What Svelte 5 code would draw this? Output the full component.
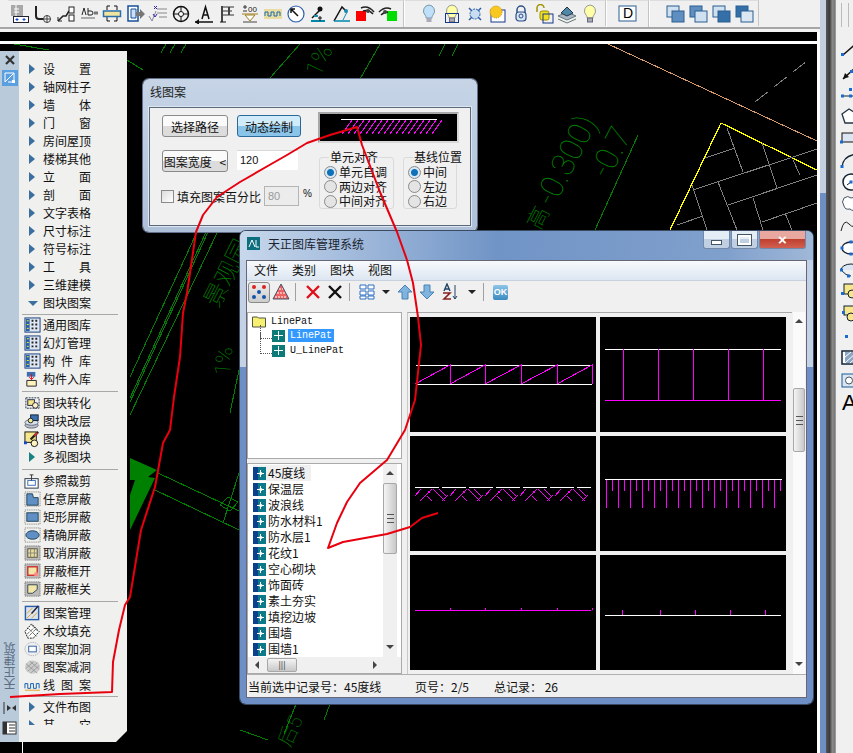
<script>
  const sym = {
    lib: '<rect x="1" y="1" width="16" height="15" fill="#dde6f2" stroke="#123a7a"/><rect x="2" y="2" width="4" height="13" fill="#2b5ea8"/><path d="M8 3h2v2H8zM12 3h2v2h-2zM8 7h2v2H8zM12 7h2v2h-2zM8 11h2v2H8zM12 11h2v2h-2z" fill="#222"/><path d="M3 4h2M3 8h2M3 12h2" stroke="#ff0"/>',
    store: '<rect x="3" y="1" width="9" height="5" fill="#3b6fb0"/><path d="M8 3v6M5.500 6.500L8 9l2.500-2.500" stroke="#e01" fill="none"/><path d="M3 10h10v6H3z" fill="#fff3c0" stroke="#222"/>',
    conv: '<rect x="2" y="3" width="14" height="11" fill="none" stroke="#234" stroke-dasharray="2 1"/><rect x="4" y="5" width="7" height="6" fill="#f6e78a" stroke="#224"/><circle cx="12" cy="11" r="3" fill="#fff3c0" stroke="#224"/>',
    layer: '<ellipse cx="8" cy="13" rx="7" ry="3" fill="#b8c2cc" stroke="#667"/><ellipse cx="8" cy="10" rx="7" ry="3" fill="#d8e0e8" stroke="#667"/><rect x="7" y="2" width="8" height="6" fill="#3b6fb0" stroke="#123"/><circle cx="7" cy="8" r="2.500" fill="#f6e78a" stroke="#123"/>',
    swap: '<rect x="1" y="1" width="12" height="11" fill="#f6e78a" stroke="#111"/><path d="M15 1L7 9" stroke="#222" stroke-width="2.500"/><path d="M14 2l-3 3" stroke="#c33" stroke-width="2"/><circle cx="11" cy="13" r="3.500" fill="#fff3c0" stroke="#111"/><rect x="0" y="11" width="3" height="3" fill="#14c"/>',
    clip: '<rect x="1" y="6" width="14" height="10" fill="#fff" stroke="#234"/><rect x="4" y="8" width="8" height="5" fill="none" stroke="#3b6fb0"/><path d="M8 2v6M6 2h4" stroke="#333"/>',
    maskL: '<rect x="1" y="1" width="16" height="15" fill="none" stroke="#777" stroke-dasharray="1 1"/><path d="M3 3h6l1 4h5v8H3z" fill="#5f8fc4" stroke="#245"/>',
    maskR: '<rect x="1" y="1" width="16" height="15" fill="none" stroke="#777" stroke-dasharray="1 1"/><rect x="3" y="4" width="12" height="9" fill="#5f8fc4" stroke="#245"/>',
    maskE: '<rect x="1" y="1" width="16" height="15" fill="none" stroke="#777" stroke-dasharray="1 1"/><ellipse cx="9" cy="8.500" rx="7" ry="4.500" fill="#5f8fc4" stroke="#245"/>',
    maskX: '<rect x="1" y="1" width="16" height="15" fill="#bbb" stroke="#666" stroke-dasharray="1 1"/><rect x="4" y="4" width="10" height="9" fill="#e8dca0" stroke="#554"/><path d="M7 4v9M11 4v9M4 8.500h10" stroke="#887"/>',
    maskO: '<rect x="1" y="1" width="16" height="15" fill="#bbb" stroke="#666" stroke-dasharray="1 1"/><rect x="4" y="4" width="10" height="9" fill="#f2e6a8" stroke="#c33" stroke-width="1.500"/><rect x="11" y="10" width="4" height="4" fill="#f88"/>',
    maskC: '<rect x="1" y="1" width="16" height="15" fill="#bbb" stroke="#666" stroke-dasharray="1 1"/><path d="M4 4h10v5l-5 4H4z" fill="#f2e6a8" stroke="#345"/>',
    pat: '<rect x="1.500" y="1.500" width="14" height="14" fill="#d8e4f2" stroke="#2b5ea8" stroke-width="1.500"/><path d="M3 14L14 3M3 9l6-6M8 14l6-6" stroke="#e8a020"/><path d="M15 1L8 9" stroke="#223" stroke-width="1.500"/>',
    wood: '<path d="M1 9L8 1l8 8-6 7H4z" fill="#fff" stroke="#111" stroke-dasharray="2 1"/><path d="M3 12L12 4M5 14l8-8M4 5l9 9M8 2l7 7" stroke="#111" stroke-dasharray="1 1"/>',
    hole: '<ellipse cx="9" cy="8.500" rx="8" ry="7" fill="none" stroke="#99a" stroke-dasharray="1 1"/><rect x="5" y="5.500" width="8" height="6" fill="#fff" stroke="#2b5ea8"/>',
    unhole: '<ellipse cx="9" cy="8.500" rx="8" ry="7" fill="#ccc"/><path d="M2 10l8-7M4 13l10-9M7 15l9-8M2 5l12 10M6 2l10 9" stroke="#888" stroke-width=".7"/>',
    wave: '<path d="M1 14h16" stroke="#e8a020"/><path d="M1 12V7h3v5h3V7h3v5h3V7h3v5" fill="none" stroke="#0a5ab0"/>'
  };

  const menu = [
    { t: '设置', a: 1 }, { t: '轴网柱子', a: 1 }, { t: '墙体', a: 1 }, { t: '门窗', a: 1 },
    { t: '房间屋顶', a: 1 }, { t: '楼梯其他', a: 1 }, { t: '立面', a: 1 }, { t: '剖面', a: 1 },
    { t: '文字表格', a: 1 }, { t: '尺寸标注', a: 1 }, { t: '符号标注', a: 1 }, { t: '工具', a: 1 },
    { t: '三维建模', a: 1 }, { t: '图块图案', d: 1 }, { sep: 'tight' },
    { t: '通用图库', i: 'lib' }, { t: '幻灯管理', i: 'lib' }, { t: '构件库', i: 'lib' }, { t: '构件入库', i: 'store' }, { sep: 'wide' },
    { t: '图块转化', i: 'conv' }, { t: '图块改层', i: 'layer' }, { t: '图块替换', i: 'swap' }, { t: '多视图块', a: 2 }, { sep: 'wide' },
    { t: '参照裁剪', i: 'clip' }, { t: '任意屏蔽', i: 'maskL' }, { t: '矩形屏蔽', i: 'maskR' }, { t: '精确屏蔽', i: 'maskE' },
    { t: '取消屏蔽', i: 'maskX' }, { t: '屏蔽框开', i: 'maskO' }, { t: '屏蔽框关', i: 'maskC' }, { sep: 'wide' },
    { t: '图案管理', i: 'pat' }, { t: '木纹填充', i: 'wood' }, { t: '图案加洞', i: 'hole' }, { t: '图案减洞', i: 'unhole' }, { t: '线图案', i: 'wave' }, { sep: 'tight' },
    { t: '文件布图', a: 1 }, { t: '其它', a: 1 }
  ];

  const group1 = [
    '<rect x="1" y="1" width="12" height="11" fill="#a8a8a8"/><path d="M6 1v11M4 5h5M4 8h5" stroke="#fff"/><rect x="3.500" y="12.500" width="15" height="6" fill="#fff" stroke="#223"/><path d="M7 14v3M5.500 15.500h3M14 14v3M12.500 15.500h3" stroke="#14c"/>',
    '<path d="M3 2v10a3 3 0 0 0 3 3h5" fill="none" stroke="#222" stroke-width="2"/><circle cx="14" cy="15" r="3.500" fill="none" stroke="#444"/><path d="M14 11v8M10 15h8" stroke="#444"/>',
    '<path d="M2 17l5-5h3l3-5" fill="none" stroke="#222" stroke-width="1.500"/><path d="M2 13v4h4" fill="none" stroke="#222"/><rect x="13" y="3" width="5" height="6" fill="#fff" stroke="#222"/><rect x="13" y="11" width="5" height="6" fill="#fff" stroke="#222"/>',
    '<path d="M2 14h14" stroke="#666"/><path d="M3 11L5 4l2 7M9 4v7h3a2 2 0 0 0 0-4H9" fill="none" stroke="#222"/><path d="M15 9h4" stroke="#777" stroke-width="3"/>',
    '<path d="M5 6V2h3M12 2h3v4M5 13v4h3M12 17h3v-4" fill="none" stroke="#111"/><rect x="1.500" y="7" width="17" height="5.500" fill="#f0e4a0" stroke="#2b6ea8" stroke-width="1.500"/>',
    '<path d="M3 2h10v15H3z" fill="#fff" stroke="#14529a" stroke-width="1.500"/><path d="M6 5h5v9H6z" fill="#cfe0f4" stroke="#14529a"/><path d="M11 8h4V5l5 5-5 5v-3h-4z" fill="#777"/>',
    '<path d="M9 5h10M9 9h10M11 13h8" stroke="#888"/><path d="M1 12l3 5 4-10" fill="none" stroke="#889"/><path d="M6 2l3 3M9 2L6 5M5 10l2 3 2-3" stroke="#32a" fill="none"/>',
    '<circle cx="10" cy="10" r="7.500" fill="none" stroke="#111" stroke-width="1.500"/><path d="M10 2v16M2 10h16" stroke="#111"/><circle cx="10" cy="10" r="2.500" fill="#fff" stroke="#111"/>',
    '<path d="M8 15L11.500 3 15 15M9.500 11h4M1 18h18" fill="none" stroke="#111" stroke-width="1.500"/><path d="M1 18l4-3v6z" fill="#111"/>',
    '<path d="M5 3h12M5 7h10M5 11h12" stroke="#333"/><path d="M5 2v16M12 3v8" stroke="#444" stroke-width="2"/><path d="M3 18h6" stroke="#111"/>',
    '<path d="M3 3h4M5 1v4M3 7h4" stroke="#333"/><text x="8" y="8" font-size="8" font-family="Liberation Sans" fill="#222">00</text><path d="M2 10h16" stroke="#a08020"/><path d="M5 11h10l-5 6z" fill="#fff" stroke="#a08020"/><path d="M3 18h14" stroke="#444"/>',
    '<rect x="1" y="5" width="18" height="10" fill="#e8dca0"/><path d="M2 12V8h3v4h3V8h3v4h3V8h3v4" fill="none" stroke="#1a6ab0"/>',
    '<circle cx="10" cy="10" r="8" fill="#fff" stroke="#2b5ea8" stroke-width="1.200"/><path d="M12 12L5 5M5 9V5h4" fill="none" stroke="#111" stroke-width="1.500"/>',
    '<path d="M2 17h14" stroke="#08a" stroke-width="2"/><path d="M3 14l4-4 5-5" stroke="#111" stroke-width="1.500"/><circle cx="11" cy="5" r="2.500" fill="#111"/><path d="M11 12v5M9 14h4" stroke="#111"/><rect x="5" y="11" width="4" height="2" fill="#1a8ab0"/>',
    '<path d="M2 17L10 3l5 5" fill="none" stroke="#111" stroke-width="1.500"/><path d="M2 17h16" stroke="#08a" stroke-width="1.500"/><circle cx="14" cy="7" r="2" fill="#1a8ab0"/><path d="M11 16l4-8" stroke="#1a8ab0"/>',
    '<rect x="1" y="7" width="10" height="10" fill="#f00"/><path d="M6 4q7-3 13 4M8 7q6-2 10 3" fill="none" stroke="#222" stroke-width="1.500"/><circle cx="13" cy="7" r="2" fill="#444"/>',
    '<rect x="9" y="7" width="10" height="10" fill="#0d0"/><path d="M1 8q6-6 12-3M3 11q3-3 7-3" fill="none" stroke="#222" stroke-width="1.500"/><circle cx="7" cy="8" r="2" fill="#444"/>'
  ];

  const bulb = '<path d="M10 1a6 6 0 0 0-4 10c1 1 1 2 1 3h6c0-1 0-2 1-3a6 6 0 0 0-4-10z" fill="#ffffa8" stroke="#999"/><rect x="7.500" y="14" width="5" height="4" fill="#aab" stroke="#667"/>';
  const group2 = [
    '<path d="M10 1a6 6 0 0 0-4 10c1 1 1 2 1 3h6c0-1 0-2 1-3a6 6 0 0 0-4-10z" fill="#bfe0f8" stroke="#79a"/><rect x="7.500" y="14" width="5" height="4" fill="#aab"/>',
    bulb + '<rect x="3.500" y="9.500" width="13" height="9" fill="none" stroke="#14388a"/>',
    '<circle cx="10" cy="10" r="5" fill="#c8dcf2" stroke="#2b5ea8" stroke-dasharray="2 1"/><path d="M4 4l3 3M16 4l-3 3M4 16l3-3M16 16l-3-3" stroke="#2b5ea8" stroke-width="1.500"/>',
    '<rect x="3" y="6" width="14" height="12" fill="#fff" stroke="#14388a"/><circle cx="8" cy="8" r="6" fill="#f8c820" stroke="#c89000" stroke-dasharray="1 1"/>',
    '<path d="M6 9V6a4 4 0 0 1 8 0v3" fill="none" stroke="#2b4f88" stroke-width="1.500"/><rect x="5" y="8" width="10" height="9" rx="3" fill="#d8e4f4" stroke="#2b4f88" stroke-width="1.200"/><circle cx="10" cy="12" r="2" fill="none" stroke="#2b4f88"/>',
    '<path d="M3 8V4a3.500 3.500 0 0 1 7 0" fill="none" stroke="#a09000" stroke-width="1.500"/><rect x="6" y="7" width="9" height="9" rx="2" fill="#f0e020" stroke="#a09000"/><rect x="9" y="10" width="10" height="9" fill="none" stroke="#14388a"/>',
    '<path d="M1 12l9-4 9 4-9 4z" fill="#aab8c8" stroke="#677"/><path d="M1 15l9 4 9-4" fill="none" stroke="#677"/><path d="M4 9l6-6 6 6-6 3z" fill="#4f88a8" stroke="#234"/>',
    bulb
  ];
  const stack = (a, b) => `<rect x="2" y="2" width="12" height="11" fill="${a}" stroke="#2b5e90"/><rect x="7" y="7" width="12" height="11" fill="${b}" stroke="#2b5e90"/>`;
  const group3 = [stack('#cfe0f0', '#5f8fc0'), stack('#5f8fc0', '#cfe0f0'), stack('#cfe0f0', '#346fa8'), stack('#346fa8', '#dbe8f4')];

  const rail = [
    '<path d="M3 15L18 2" stroke="#111" stroke-width="1.500"/><rect x="1" y="13" width="3" height="3" fill="#1a6ad0"/><rect x="16" y="1" width="3" height="3" fill="#1a6ad0"/>',
    '<path d="M3 17L18 3" stroke="#111" stroke-width="1.500"/><path d="M3 17l2-6 4 4z" fill="#111"/><rect x="10" y="8" width="3" height="3" fill="#1a6ad0"/>',
    '<path d="M2 12h18" stroke="#123"/><rect x="1" y="10.500" width="3" height="3" fill="#1a6ad0"/><rect x="9" y="10.500" width="3" height="3" fill="#1a6ad0"/><rect x="9" y="4" width="3" height="3" fill="#1a6ad0"/>',
    '<path d="M2 8l7-5 8 5-3 9H5z" fill="#fff" stroke="#234" stroke-width="1.300"/>',
    '<rect x="2" y="5" width="18" height="9" fill="#dce6f2" stroke="#111"/><rect x="0" y="12.500" width="3" height="3" fill="#1a6ad0"/>',
    '<path d="M2 17Q3 5 18 4" fill="none" stroke="#123" stroke-width="1.300"/><rect x="0.500" y="15" width="3" height="3" fill="#1a6ad0"/>',
    '<circle cx="11" cy="10" r="8" fill="#fff" stroke="#123" stroke-width="1.500"/><path d="M11 10L7 13" stroke="#123"/><rect x="9.500" y="8.500" width="3" height="3" fill="#1a6ad0"/>',
    '<path d="M4 4q4-3 7 0q6-2 9 2l-1 9q-6 3-9 0q-5 1-6-3q-3-4 0-8z" fill="#fff" stroke="#456"/>',
    '<path d="M1 15Q4 2 9 8t11-2" fill="none" stroke="#222"/>',
    '<ellipse cx="11" cy="10" rx="9" ry="6" fill="#fff" stroke="#123" stroke-width="1.300"/><rect x="0.500" y="8.500" width="3" height="3" fill="#1a6ad0"/><rect x="9.500" y="2.500" width="3" height="3" fill="#1a6ad0"/><rect x="9.500" y="14.500" width="3" height="3" fill="#1a6ad0"/>',
    '<path d="M1 10a10 6 0 0 1 20 0" fill="#dce6f2" stroke="#123"/><path d="M1 10q5 6 10 6" fill="none" stroke="#123"/><rect x="0" y="8.500" width="3" height="3" fill="#1a6ad0"/><rect x="7" y="14.500" width="3" height="3" fill="#1a6ad0"/>',
    '<rect x="4" y="2" width="12" height="10" fill="#f6e78a" stroke="#123"/><circle cx="12" cy="12" r="4" fill="#f6e78a" stroke="#123"/><rect x="1" y="10" width="3" height="3" fill="#1a6ad0"/>',
    '<rect x="4" y="2" width="10" height="9" fill="#f6e78a" stroke="#123"/><circle cx="11" cy="13" r="4" fill="#f6e78a" stroke="#123"/><rect x="2" y="7" width="3" height="3" fill="#1a6ad0"/>',
    '<rect x="5" y="9" width="3" height="3" fill="#1a6ad0"/>',
    '<rect x="2" y="3" width="18" height="13" fill="#fff" stroke="#123" stroke-width="1.500"/><rect x="5" y="4" width="12" height="11" fill="#8aa6c4"/><path d="M5 15L17 4M5 9l6-5M10 15l7-6" stroke="#fff"/>',
    '<rect x="2" y="4" width="18" height="13" fill="#dce6f2" stroke="#1a5a98"/><circle cx="9" cy="10.500" r="3.500" fill="#fff" stroke="#456"/>'
  ];

  const fileList = ['45度线', '保温层', '波浪线', '防水材料1', '防水层1', '花纹1', '空心砌块', '饰面砖', '素土夯实', '填挖边坡', '围墙', '围墙1'];

  const cell1x = [40, 75, 111, 147, 182];
  const cell2x = [23, 58, 93, 128, 163];
  const cell6x = [22, 60, 95, 130, 165];

  let hatch = '';
  for (let k = 0; k < 5; k++) {
    const x = 5 + 35 * k;
    hatch += `M${x} 60l6-7M${x + 5} 65l12-12M${x + 12} 60l5 5M${x + 18} 53l12 12M${x + 24} 53l7 7M${x + 27} 65l6-6M${x + 13} 55l2 2 `;
  }

  const ticks = [];
  for (let i = 0; i < 30; i++) ticks.push({ x: 6 + i * 6, y: i % 2 ? 55 : 72 });

  let diag = '';
  for (let x = 342; x < 436; x += 6) diag += `M${x} 134l10-14 `;
</script>

<div class="app">
  <div class="main">
    <div class="topbar">
      <div class="tgroup first">
        {#each group1 as ic}
          <span class="tb"><svg viewBox="0 0 20 20" width="20" height="20">{@html ic}</svg></span>
        {/each}
      </div>
      <div class="tgroup second">
        {#each group2 as ic}
          <span class="tb"><svg viewBox="0 0 20 20" width="20" height="20">{@html ic}</svg></span>
        {/each}
      </div>
      <div class="tgroup third">
        <span class="tb d"><svg viewBox="0 0 20 20" width="20" height="20"><rect x="1" y="2" width="17" height="15" fill="#fff" stroke="#2b5e90"/></svg><b>D</b></span>
      </div>
      <div class="tgroup fourth">
        {#each group3 as ic}
          <span class="tb"><svg viewBox="0 0 20 20" width="20" height="20">{@html ic}</svg></span>
        {/each}
      </div>
    </div>
    <div class="cmdline"></div>
    <div class="canvas">
      <svg class="cad" viewBox="0 44 817 709" width="817" height="709" fill="none">
        <g stroke="#008000" shape-rendering="crispEdges">
          <path d="M14 44l35 6M166 44l-5 9M175 44l-5 9M186 44l-5 9M445 44l-6 12M458 44l-6 12" />
          <path d="M130 377L197 232M130 398L206 232M130 402L208 232M130 415L217 233M230 413L239 370" />
          <path d="M158 473L239 511M155 490L239 530M223 523L239 473" />
          <path d="M220 505l8-8 10 5-8 9z" />
          <path d="M638 135L595 230" />
          <path d="M296 704l-12 30M330 704l-6 16M240 730l28 10" />
          <path d="M127 60L143 70M300 44l-30 34M380 44l-20 35" />
        </g>
        <path d="M130 458L157 470 148 477 155 478 130 530V495L135 480 130 480z" fill="#008000" />
        <g class="cadtext">
          <text font-size="32" transform="translate(554 208) rotate(-63)">-0.300)</text>
          <text font-size="32" transform="translate(609 180) rotate(-63)">-0.7</text>
          <text font-size="22" transform="translate(540 231) rotate(-63)">高</text>
          <text font-size="24" transform="translate(218 309) rotate(-63)">景观园</text>
          <text font-size="22" transform="translate(230 376) rotate(-85)">1%</text>
          <text font-size="24" transform="translate(320 78) rotate(-65)">1%</text>
          <text font-size="20" transform="translate(290 748) rotate(-65)">后5</text>
        </g>
        <path d="M608 44L817 141" stroke="#d79b6c" shape-rendering="crispEdges" />
        <path d="M670 230L721 123 817 170" stroke="#ff0" stroke-width="1.300" shape-rendering="crispEdges" />
        <g stroke="#808080" shape-rendering="crispEdges">
          <path d="M755 102L812 57" stroke-dasharray="16 8" />
          <path d="M727 128L743 172M735 148L705 158M693 190L817 149M762 143L777 188M728 205L817 175M718 182L737 230M692 185L707 230M753 198L763 230M677 225L703 216M762 222L817 203M785 213L792 230M793 160L800 175" />
        </g>
        <path d="M22 742V753" stroke="#fff" shape-rendering="crispEdges" />
      </svg>
    </div>
  </div>
  <div class="strip"></div>
  <div class="gutter"></div>
  <div class="rail">
    <div class="grip"></div>
    {#each rail as ic}
      <span class="rb"><svg viewBox="0 0 22 20" width="22" height="20">{@html ic}</svg></span>
    {/each}
    <span class="ra">A</span>
  </div>

  <div class="palette">
    <div class="pal-strip">
      <svg class="close" viewBox="0 0 12 12" width="12" height="12"><path d="M2 2l8 8M10 2l-8 8" stroke="#333" stroke-width="2.200"/></svg>
      <svg class="blue" viewBox="0 0 16 16" width="16" height="16"><rect width="16" height="16" fill="#5aa0e0"/><path d="M3 12L12 3H3zM12 3v9H6" fill="none" stroke="#fff"/><rect x="10" y="10" width="3" height="3" fill="#fff"/></svg>
      <span class="vtext">天正建筑</span>
      <svg class="pin" viewBox="0 0 16 14" width="16" height="14"><path d="M2 1v12" stroke="#333"/><path d="M9 7l-4-3v6zM10 7l4-3v6z" fill="#333"/></svg>
      <svg class="pin" viewBox="0 0 16 14" width="16" height="14"><rect x="1" y="1" width="13" height="12" fill="#fff" stroke="#333"/><rect x="1" y="1" width="4" height="12" fill="#333"/><path d="M7 4h6M7 7h6M7 10h6" stroke="#333"/></svg>
    </div>
    <div class="pal-body">
      <div class="menu-list">
        {#each menu as m}
          {#if m.sep}
            <div class="sep {m.sep}"></div>
          {:else}
            <div class="row">
              <span class="gl">
                {#if m.a === 1}<i class="arr"></i>{/if}
                {#if m.a === 2}<i class="arr teal"></i>{/if}
                {#if m.d}<i class="arr-d"></i>{/if}
                {#if m.i}<svg viewBox="0 0 18 18" width="17" height="17">{@html sym[m.i]}</svg>{/if}
              </span>
              <span class="lb">{m.t}</span>
            </div>
          {/if}
        {/each}
      </div>
    </div>
  </div>

  <div class="dialog">
    <div class="dlg-title">线图案</div>
    <div class="dlg-panel">
      <div class="dlg-left">
        <div class="dl-row">
          <button class="btn">选择路径</button>
          <button class="btn on">动态绘制</button>
        </div>
        <div class="dl-row next">
          <button class="btn spaced">图案宽度 &lt;</button>
          <span class="field">120</span>
        </div>
        <div class="dl-row next tight">
          <span class="check"></span>
          <span class="fill-lb">填充图案百分比</span>
          <span class="field off">80</span>
          <span class="pct">%</span>
        </div>
      </div>
      <div class="dlg-right">
        <div class="preview">
          <svg viewBox="320 114 137 27" width="137" height="27" shape-rendering="crispEdges">
            <path d="M341 119H437" stroke="#fff" />
            <path d={diag} stroke="#f0f" />
          </svg>
        </div>
        <div class="groups">
          <fieldset class="g1">
            <legend>单元对齐</legend>
            <div class="radio"><i class="rd sel"></i>单元自调</div>
            <div class="radio"><i class="rd"></i>两边对齐</div>
            <div class="radio"><i class="rd"></i>中间对齐</div>
          </fieldset>
          <fieldset class="g2">
            <legend>基线位置</legend>
            <div class="radio"><i class="rd sel"></i>中间</div>
            <div class="radio"><i class="rd"></i>左边</div>
            <div class="radio"><i class="rd"></i>右边</div>
          </fieldset>
        </div>
      </div>
    </div>
  </div>

  <div class="win">
    <div class="win-title">
      <svg viewBox="0 0 13 13" width="13" height="13"><rect width="13" height="13" fill="#0d6e7e"/><path d="M2 10l3-7 3 7M9 3v7h3" fill="none" stroke="#fff"/></svg>
      <span class="wt">天正图库管理系统</span>
      <div class="caps">
        <span class="cap"><i class="c-min"></i></span>
        <span class="cap"><i class="c-max"></i></span>
        <span class="cap x">×</span>
      </div>
    </div>
    <div class="client">
      <div class="menubar">
        <span>文件</span><span>类别</span><span>图块</span><span>视图</span>
      </div>
      <div class="wtools">
        <span class="wb pressed"><svg viewBox="0 0 18 18" width="18" height="18"><circle cx="4" cy="4" r="2" fill="#d22"/><circle cx="14" cy="4" r="2" fill="#d22"/><circle cx="9" cy="9" r="2" fill="#15a"/><circle cx="4" cy="14" r="2" fill="#15a"/><circle cx="14" cy="14" r="2" fill="#15a"/></svg></span>
        <span class="wb"><svg viewBox="0 0 18 18" width="18" height="18"><path d="M9 1L17 16H1z" fill="#f06060" stroke="#456"/><path d="M3 14h12M5 10h8M7 6h4" stroke="#fff" stroke-dasharray="2 1"/></svg></span>
        <i class="wsep"></i>
        <span class="wb"><svg viewBox="0 0 18 18" width="18" height="18"><path d="M3 3l12 12M15 3L3 15" stroke="#e0101a" stroke-width="2.400"/></svg></span>
        <span class="wb"><svg viewBox="0 0 18 18" width="18" height="18"><path d="M3 3l12 12M15 3L3 15" stroke="#111" stroke-width="2.400"/></svg></span>
        <i class="wsep"></i>
        <span class="wb"><svg viewBox="0 0 18 18" width="18" height="18"><path d="M2 2h6v4H2zM10 2h6v4h-6zM2 8h6v4H2zM10 8h6v4h-6zM2 13h6v3H2zM10 13h6v3h-6z" fill="#fff" stroke="#2b6ec0"/></svg></span>
        <i class="drop"></i>
        <span class="wb"><svg viewBox="0 0 18 18" width="18" height="18"><path d="M9 2l7 7h-4v7H6V9H2z" fill="#7fb4e0" stroke="#4a80b0"/></svg></span>
        <span class="wb"><svg viewBox="0 0 18 18" width="18" height="18"><path d="M9 16L2 9h4V2h6v7h4z" fill="#7fb4e0" stroke="#4a80b0"/></svg></span>
        <span class="wb az">
          <svg viewBox="0 0 18 18" width="18" height="18"><path d="M3 8L6 1l3 7M4 6h4" fill="none" stroke="#246" stroke-width="1.400"/><path d="M2 10h7L3 16h7" fill="none" stroke="#822" stroke-width="1.600"/><path d="M14 2v14M12 13l2 3 2-3" fill="none" stroke="#246"/></svg>
        </span>
        <i class="drop"></i>
        <i class="wsep"></i>
        <span class="wb ok">OK</span>
      </div>
      <div class="wbody">
        <div class="leftcol">
          <div class="tree">
            <div class="tnode root">
              <svg viewBox="0 0 14 13" width="14" height="13"><path d="M0.500 2h5l1 1h7v9h-13z" fill="#f8f070" stroke="#554"/></svg>
              <span class="mono">LinePat</span>
            </div>
            <div class="tnode">
              <i class="twig"></i>
              <span class="leaf"></span>
              <span class="mono picked">LinePat</span>
            </div>
            <div class="tnode">
              <i class="twig long"></i>
              <span class="leaf"></span>
              <span class="mono">U_LinePat</span>
            </div>
          </div>
          <div class="listbox">
            <div class="items">
              {#each fileList as f, i}
                <div class="item" class:cur={i === 0}><span class="lic"></span>{f}</div>
              {/each}
            </div>
            <div class="vscroll">
              <i class="up"></i>
              <span class="thumb"><b></b></span>
              <i class="dn"></i>
            </div>
            <div class="hscroll">
              <i class="lt"></i>
              <span class="hthumb">|||</span>
              <i class="rt"></i>
            </div>
          </div>
        </div>
        <div class="rightcol">
          <div class="grid">
            <div class="cell">
              <svg viewBox="0 0 186 115" width="186" height="115" shape-rendering="crispEdges">
                <path d="M6 48H182M6 67H182" stroke="#fff" />
                <path d="M5 67L40 48V67L75 48V67L111 48V67L147 48V67L182 48V67" stroke="#f0f" fill="none" />
              </svg>
            </div>
            <div class="cell">
              <svg viewBox="0 0 186 115" width="186" height="115" shape-rendering="crispEdges">
                <path d="M5 32H181" stroke="#fff" />
                <path d="M5 83H181" stroke="#f0f" />
                {#each cell2x as x}<path d="M{x} 32V83" stroke="#f0f" />{/each}
              </svg>
            </div>
            <div class="cell">
              <svg viewBox="0 0 186 115" width="186" height="115" shape-rendering="crispEdges">
                <path d="M5 51H181" stroke="#fff" stroke-dasharray="24 3" />
                <path d={hatch} stroke="#f0f" fill="none" />
              </svg>
            </div>
            <div class="cell">
              <svg viewBox="0 0 186 115" width="186" height="115" shape-rendering="crispEdges">
                {#each ticks as t}<path d="M{t.x} 43V{t.y}" stroke="#f0f" />{/each}
                <path d="M5 43H182" stroke="#fff" />
              </svg>
            </div>
            <div class="cell">
              <svg viewBox="0 0 186 115" width="186" height="115" shape-rendering="crispEdges">
                <path d="M5 55H181" stroke="#f0f" />
                {#each cell1x as x}<path d="M{x} 53V55" stroke="#f0f" />{/each}
              </svg>
            </div>
            <div class="cell">
              <svg viewBox="0 0 186 115" width="186" height="115" shape-rendering="crispEdges">
                <path d="M5 60H181" stroke="#fff" />
                {#each cell6x as x}<path d="M{x} 55V60" stroke="#f0f" />{/each}
              </svg>
            </div>
          </div>
          <div class="vscroll big">
            <i class="up"></i>
            <span class="thumb"><b></b></span>
            <i class="dn"></i>
          </div>
        </div>
      </div>
      <div class="status">
        <span class="s1">当前选中记录号：45度线</span>
        <span class="s2">页号：2/5</span>
        <span class="s3">总记录： 26</span>
      </div>
    </div>
  </div>

  <svg class="ink" viewBox="0 0 853 753" width="853" height="753" fill="none">
    <path
      d="M10 697L60 694 112 692 113 662 119 630 125 605 130 597 141 530 155 487 163 443 170 430 174 397 180 357 183 313 187 293 190 273 196 232 203 215 217 197 240 182 273 163 287 155 307 143 330 135 357 127 362 145 380 192 397 232 407 260 413 283 418 317 421 345 415 400 405 430 387 460 360 483 347 502 337 523 328 548 343 542 387 534 410 527 422 518 438 513"
      stroke="#e8000f"
      stroke-width="2"
      stroke-linejoin="round"
    />
  </svg>
</div>

<style>
  :global(body) { margin: 0; background: #000; }
  .app {
    position: relative;
    width: 853px;
    height: 753px;
    display: flex;
    overflow: hidden;
    background: #000;
    font-family: "Noto Sans CJK SC", "Liberation Sans", sans-serif;
    font-size: 12px;
    color: #111;
  }
  .main { width: 820px; display: flex; flex-direction: column; }
  .topbar {
    display: flex;
    height: 27px;
    background: #f0f0f0;
    border-bottom: 2px solid #a6a6a6;
    padding-left: 8px;
    margin-bottom: 3px;
    box-shadow: 0 3px 0 #f4f4f4;
    box-sizing: content-box;
  }
  .tgroup { display: flex; align-items: center; height: 26px; border-right: 1px solid #c4c4c4; border-top: 1px solid #ddd; }
  .first { width: 395px; }
  .second { width: 202px; padding-left: 12px; box-sizing: border-box; border-left: 1px solid #fff; }
  .third { width: 41px; justify-content: center; border-left: 1px solid #fff; }
  .fourth { width: 110px; padding-left: 13px; box-sizing: border-box; border-left: 1px solid #fff; }
  .tb { position: relative; width: 23px; display: flex; justify-content: center; flex: none; }
  .tb.d b {
    position: absolute;
    left: 7px;
    top: 1px;
    font: 14px "Liberation Sans", sans-serif;
    color: #000;
  }
  .cmdline { height: 9px; background: #000; border-right: 3px solid #fff; }
  .canvas { flex: 1; border-top: 3px solid #fff; border-right: 3px solid #fff; overflow: hidden; }
  .cad { display: block; }
  .cadtext { fill: #008000; font-family: Roboto, "Noto Sans CJK SC", sans-serif; font-weight: 100; }

  .strip { width: 6px; background: linear-gradient(#c4d0e0 0 193px, #6d8fc3 193px); }
  .gutter { width: 9px; background: linear-gradient(90deg, #555, #3b3b3b 40%, #8a8a8a 70%, #777); }
  .rail {
    flex: 1;
    display: flex;
    flex-direction: column;
    align-items: flex-start;
    background: #f0f0f0;
    border-left: 1px solid #999;
    padding-left: 4px;
    overflow: hidden;
  }
  .grip {
    flex: none;
    width: 6px;
    height: 24px;
    margin: 3px 0 12px 1px;
    border-left: 1px solid #bbb;
    border-right: 1px solid #bbb;
  }
  .rb { height: 22px; display: flex; align-items: center; flex: none; }
  .ra { font: 22px "Liberation Sans", sans-serif; color: #000; line-height: 24px; margin-left: 2px; }

  .palette {
    position: absolute;
    left: 0;
    top: 51px;
    width: 127px;
    height: 691px;
    display: flex;
    background: #f0f0ee;
    clip-path: polygon(0 0, 100% 0, 100% 680px, 116px 100%, 0 100%);
  }
  .pal-strip {
    width: 19px;
    display: flex;
    flex-direction: column;
    align-items: center;
    background: #b9cadb;
    padding-top: 2px;
  }
  .close { margin-top: 1px; }
  .blue { margin-top: 4px; }
  .vtext {
    margin-top: auto;
    margin-bottom: 5px;
    writing-mode: vertical-rl;
    transform: rotate(180deg);
    color: #5d6f85;
    line-height: 14px;
  }
  .pin { margin-top: 6px; }
  .pin:last-child { margin-bottom: 7px; }
  .pal-body { flex: 1; }
  .menu-list { height: 665px; margin-top: 9px; overflow: hidden; padding-left: 3px; }
  .row { display: flex; align-items: center; height: 18px; }
  .gl { width: 21px; display: flex; justify-content: center; align-items: center; flex: none; }
  .lb {
    width: 48px;
    line-height: 16px;
    text-align: justify;
    text-align-last: justify;
    color: #111;
  }
  .arr { width: 0; height: 0; border-style: solid; border-width: 5px 0 5px 6px; border-color: transparent transparent transparent #3b6f9f; margin-left: -2px; }
  .arr.teal { border-left-color: #1a8080; }
  .arr-d { width: 0; height: 0; border-style: solid; border-width: 5px 5px 0; border-color: #3b6f9f transparent transparent; }
  .sep { border-bottom: 1px solid #a8a8a8; margin-right: 9px; box-sizing: border-box; }
  .sep.tight { height: 3px; margin-bottom: 1px; }
  .sep.wide { height: 4px; margin-bottom: 2px; }

  .dialog {
    position: absolute;
    left: 143px;
    top: 79px;
    width: 334px;
    height: 153px;
    box-sizing: border-box;
    padding: 0 6px 6px;
    border-radius: 6px;
    background: linear-gradient(#c6d4e6, #aec0d8);
    box-shadow: 0 0 0 1px #60708a;
    display: flex;
    flex-direction: column;
  }
  .dlg-title { height: 28px; line-height: 26px; padding-left: 1px; color: #222; }
  .dlg-panel {
    flex: 1;
    display: grid;
    grid-template-columns: 157px 1fr;
    background: #f0f0f0;
    border: 1px solid #5a6a7a;
    box-shadow: 0 0 0 1px #dde6f0;
    padding: 4px 0 0 12px;
  }
  .dlg-left { margin-top: 3px; }
  .dl-row { display: flex; align-items: center; gap: 9px; height: 22px; }
  .dl-row.next { margin-top: 13px; }
  .dl-row.tight { gap: 0; }
  .btn {
    width: 66px;
    height: 22px;
    padding: 0;
    border: 1px solid #8a8a8a;
    border-radius: 3px;
    background: linear-gradient(#fafafa 50%, #dcdcdc 50%);
    font: inherit;
    color: #111;
    white-space: nowrap;
  }
  .btn.spaced { word-spacing: 5px; }
  .btn.on { width: 64px; background: linear-gradient(#d0ecfa 50%, #8ac4e8 50%); border-color: #2a6a9a; }
  .field {
    width: 61px;
    height: 20px;
    box-sizing: border-box;
    background: #fff;
    padding-left: 3px;
    font: 11px/19px "Liberation Sans", sans-serif;
    border-top: 1px solid #d8d8d8;
    margin-top: -2px;
  }
  .field.off {
    width: 35px;
    margin: 0 0 0 3px;
    background: #ececec;
    color: #999;
    border: 1px solid #b4b4b4;
  }
  .check { width: 13px; height: 13px; box-sizing: border-box; border: 1px solid #8a8a8a; background: linear-gradient(135deg, #ddd, #fff); margin-left: -1px; flex: none; }
  .fill-lb { margin-left: 3px; width: 84px; flex: none; white-space: nowrap; }
  .pct { font: 10px "Liberation Sans", sans-serif; margin: -6px 0 0 4px; }
  .preview {
    width: 137px;
    height: 27px;
    border: 2px solid #a8a8a8;
    border-color: #a8a8a8 #d8d8d8 #d8d8d8 #a8a8a8;
    margin-left: -1px;
    background: #000;
  }
  .preview svg { display: block; }
  .groups { display: flex; gap: 9px; margin-top: 7px; }
  fieldset {
    margin: 0;
    padding: 1px 0 0 3px;
    min-width: 0;
    height: 59px;
    box-sizing: border-box;
    border: 1px solid #dadada;
    border-radius: 3px;
  }
  .g1 { width: 75px; }
  .g2 { width: 54px; }
  legend { padding: 0 1px; margin-left: 6px; line-height: 14px; white-space: nowrap; }
  .radio { display: flex; align-items: center; gap: 2px; height: 14.5px; line-height: 14px; margin-left: 1px; white-space: nowrap; }
  .rd {
    width: 11px;
    height: 11px;
    border-radius: 50%;
    border: 1px solid #8a8a8a;
    background: #e4e4e4;
    flex: none;
  }
  .rd.sel { background: radial-gradient(circle, #1070b8 0 3px, #d8e8f4 4px); }

  .win {
    position: absolute;
    left: 240px;
    top: 231px;
    width: 573px;
    height: 473px;
    box-sizing: border-box;
    padding: 0 6px 6px;
    border-radius: 6px;
    background: linear-gradient(#c0d0e6 0, #c4d2e6 136px, #6d8fc6 136px);
    box-shadow: 0 0 0 1px #3a4a60;
    display: flex;
    flex-direction: column;
  }
  .win-title {
    height: 29px;
    flex: none;
    display: flex;
    align-items: center;
    margin: 0 -6px;
    padding: 0 7px 5px;
    box-sizing: border-box;
    border-radius: 6px 6px 0 0;
    background: linear-gradient(90deg, #c8d8ec, #7094c6 45%, #80a0cc 85%, #a0b8d8);
  }
  .wt { margin-left: 8px; color: #1a2430; }
  .caps { margin-left: auto; display: flex; gap: 1px; align-self: flex-start; }
  .cap {
    width: 27px;
    height: 18px;
    display: flex;
    align-items: center;
    justify-content: center;
    box-sizing: border-box;
    border: 1px solid #7488a8;
    border-top: 0;
    border-radius: 0 0 3px 3px;
    background: linear-gradient(#e4ecf6 45%, #c0cfe2 50%);
  }
  .cap.x {
    width: 47px;
    color: #fff;
    font: bold 15px "Liberation Sans", sans-serif;
    background: linear-gradient(#e8a8a0 45%, #c04030 50%, #d06050);
  }
  .c-min { width: 9px; height: 3px; background: #fff; border: 1px solid #456; margin-top: 6px; }
  .c-max { width: 9px; height: 6px; border: 2px solid #fff; outline: 1px solid #456; }
  .client { flex: 1; display: flex; flex-direction: column; background: #f0f0f0; border: 1px solid #667; min-height: 0; }
  .menubar {
    height: 20px;
    flex: none;
    display: flex;
    align-items: center;
    gap: 14px;
    padding: 0 0 3px 7px;
    box-sizing: border-box;
    background: linear-gradient(#f8fafc, #dce6f2);
    border-bottom: 1px solid #c8d0dc;
  }
  .wtools { height: 25px; flex: none; display: flex; align-items: center; padding: 0 0 3px 1px; box-sizing: border-box; }
  .wb { width: 22px; display: flex; justify-content: center; flex: none; }
  .wb.pressed { height: 21px; align-items: center; border: 1px solid #8a8a8a; border-radius: 3px; background: linear-gradient(#eee, #ccc); box-sizing: border-box; }
  .wb.az { margin: 0 3px 0 1px; }
  .wsep { width: 1px; height: 18px; background: #a0a0a0; margin-left: 3px; }
  .wsep + .wb { margin-left: 6px; }
  .wsep + .wb.ok {
    width: 15px;
    height: 15px;
    margin-left: 9px;
    border-radius: 2px;
    background: linear-gradient(#8cc4e8, #3c8ac0);
    color: #fff;
    font: bold 9px/15px "Liberation Sans", sans-serif;
  }
  .drop { width: 0; height: 0; border-style: solid; border-width: 4px 4px 0; border-color: #222 transparent transparent; margin: 0 4px; }
  .wbody { flex: 1; display: flex; min-height: 0; }
  .leftcol { width: 155px; flex: none; margin-top: 6px; display: flex; flex-direction: column; gap: 4px; }
  .tree {
    height: 147px;
    box-sizing: border-box;
    background: #fff;
    border: 1px solid #aaa;
    padding: 1px 0 0 4px;
  }
  .tnode { display: flex; align-items: center; height: 14px; }
  .tnode:nth-child(n + 2) { height: 15px; }
  .mono { font: 10px/13px "Liberation Mono", monospace; padding: 0 2px; margin-left: 3px; }
  .picked { background: #3399ff; color: #fff; line-height: 13px; }
  .twig { width: 12px; height: 14px; margin: -8px 0 0 8px; border-left: 1px dotted #555; border-bottom: 1px dotted #555; flex: none; box-sizing: border-box; }
  .twig.long { height: 22px; margin-top: -15px; }
  .leaf {
    width: 13px;
    height: 12px;
    background:
      linear-gradient(#fff, #fff) center / 9px 1px no-repeat,
      linear-gradient(#fff, #fff) center / 1px 9px no-repeat,
      #0d7a7a;
    flex: none;
  }
  .listbox {
    height: 211px;
    box-sizing: border-box;
    background: #fff;
    border: 1px solid #aaa;
    display: grid;
    grid-template-columns: 135px 1fr;
    grid-template-rows: 1fr 16px;
  }
  .items { padding: 1px 0 0 5px; overflow: hidden; }
  .item { height: 16px; display: flex; align-items: center; line-height: 16px; white-space: nowrap; }
  .item.cur { width: 58px; background: #f0f0f0; }
  .lic {
    width: 13px;
    height: 13px;
    margin-right: 2px;
    flex: none;
    background:
      radial-gradient(circle at 60% 50%, #fff 0 1px, transparent 2px),
      linear-gradient(#fff, #fff) 60% 50% / 7px 1px no-repeat,
      linear-gradient(#fff, #fff) 60% 50% / 1px 7px no-repeat,
      linear-gradient(90deg, #0c3f8c 40%, #0d7a8a 40%);
  }
  .vscroll {
    position: relative;
    width: 14px;
    background: #f0f0f0;
    display: flex;
    flex-direction: column;
    align-items: center;
  }
  .vscroll .thumb {
    position: absolute;
    top: 19px;
    left: 0;
    width: 14px;
    height: 71px;
    box-sizing: border-box;
    border: 1px solid #a8a8a8;
    border-radius: 2px;
    background: linear-gradient(90deg, #f4f4f4, #c8c8c8);
    display: flex;
    align-items: center;
    justify-content: center;
  }
  .thumb b { width: 7px; height: 7px; border-top: 1px solid #555; border-bottom: 1px solid #555; background: linear-gradient(#555, #555) center / 100% 1px no-repeat; }
  .up { width: 0; height: 0; margin-top: 7px; border-style: solid; border-width: 0 4px 4px; border-color: transparent transparent #444; }
  .dn { width: 0; height: 0; margin-top: auto; margin-bottom: 8px; border-style: solid; border-width: 4px 4px 0; border-color: #444 transparent transparent; }
  .hscroll {
    grid-column: 1 / -1;
    display: flex;
    align-items: center;
    background: #f0f0f0;
    padding-left: 7px;
    color: #555;
  }
  .hthumb {
    width: 30px;
    height: 14px;
    margin-left: 8px;
    box-sizing: border-box;
    border: 1px solid #a8a8a8;
    border-radius: 2px;
    background: linear-gradient(#f4f4f4, #c8c8c8);
    text-align: center;
    font: 9px/12px "Liberation Sans", sans-serif;
  }
  .lt { width: 0; height: 0; border-style: solid; border-width: 4px 4px 4px 0; border-color: transparent #444 transparent transparent; }
  .rt { width: 0; height: 0; margin-left: 76px; border-style: solid; border-width: 4px 0 4px 4px; border-color: transparent transparent transparent #444; }
  .rightcol { flex: 1; display: flex; margin: 6px 0 0 5px; min-width: 0; }
  .grid {
    width: 385px;
    height: 362px;
    box-sizing: border-box;
    border-top: 1px solid #a8a8a8;
    border-left: 1px solid #c8c8c8;
    padding: 4px 0 0 2px;
    display: grid;
    grid-template-columns: 186px 186px;
    grid-template-rows: repeat(3, 115px);
    gap: 4px;
  }
  .cell { background: #000; overflow: hidden; }
  .cell svg { display: block; }
  .vscroll.big { width: 12px; margin-left: 1px; background: #fafafa; }
  .vscroll.big .thumb { top: 76px; width: 12px; height: 64px; }
  .status { height: 23px; flex: none; display: flex; align-items: center; background: #f0f0f0; border-top: 1px solid #b0b0b0; padding-left: 1px; box-sizing: border-box; }
  .s1 { width: 167px; }
  .s2 { width: 79px; }

  .ink { position: absolute; left: 0; top: 0; pointer-events: none; }
</style>
